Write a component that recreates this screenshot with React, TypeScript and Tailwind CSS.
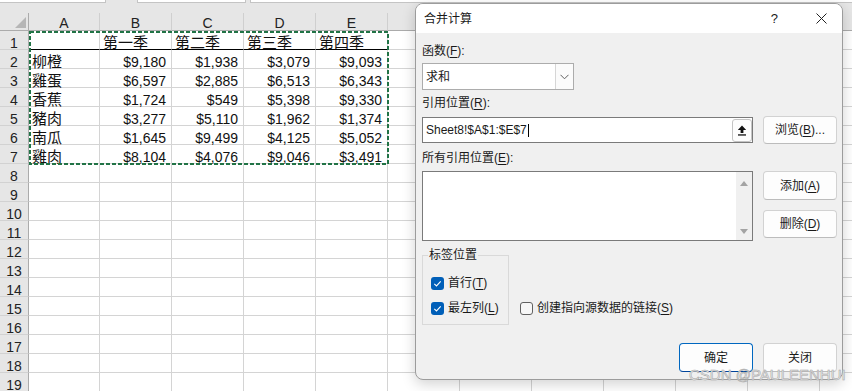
import React from "react";

const COLS = ["A", "B", "C", "D", "E", "F", "G", "H", "I", "J", "K", "L"];
const DATA: string[][] = [
  ["", "第一季", "第二季", "第三季", "第四季"],
  ["柳橙", "$9,180", "$1,938", "$3,079", "$9,093"],
  ["雞蛋", "$6,597", "$2,885", "$6,513", "$6,343"],
  ["香蕉", "$1,724", "$549", "$5,398", "$9,330"],
  ["豬肉", "$3,277", "$5,110", "$1,962", "$1,374"],
  ["南瓜", "$1,645", "$9,499", "$4,125", "$5,052"],
  ["雞肉", "$8,104", "$4,076", "$9,046", "$3,491"],
];

const colW = (i: number) => (i === 0 ? "w-[71px]" : "w-[72px]");

function Cell({ r, c }: { r: number; c: number }) {
  const row = DATA[r - 1];
  const val = row && c < 5 ? row[c] : "";
  const isNum = val.startsWith("$");
  const bottom = r === 1 && c < 5 ? "border-b-black" : "border-b-[#d4d4d4]";
  return (
    <div
      className={`${colW(c)} h-[19px] shrink-0 bg-white border-r border-b border-r-[#d4d4d4] ${bottom} pt-[3px] leading-[18px] whitespace-nowrap text-[#111] ${
        isNum ? "text-right pr-[5px] text-[14px]" : "pl-[3px] text-[15px]"
      }`}
    >
      {val}
    </div>
  );
}

function Sheet() {
  const rows = Array.from({ length: 19 }, (_, i) => i + 1);
  return (
    <div className="font-['Liberation_Sans','Noto_Sans_CJK_SC',sans-serif] bg-white">
      {/* top strip */}
      <div className="h-[13px] bg-[#e6e6e6] flex items-start">
        <div className="w-[106px] h-[3px] bg-white border-r border-b border-[#c4c4c4]" />
        <div className="ml-[31px] w-[109px] h-[3px] bg-white border-x border-b border-[#c4c4c4]" />
        <div className="ml-[4px] flex-1 h-[3px] bg-white border-l border-b border-[#c4c4c4]" />
      </div>
      {/* column header */}
      <div className="flex h-[18px]">
        <div className="w-[29px] shrink-0 h-[18px] bg-[#e6e6e6] border-r border-b border-[#ababab] relative">
          <svg className="absolute left-[15px] top-[4px]" width="11" height="11" viewBox="0 0 11 11">
            <path d="M11 0 L11 11 L0 11 Z" fill="#b6b6b6" />
          </svg>
        </div>
        {COLS.map((c, i) => (
          <div
            key={c}
            className={`${colW(i)} shrink-0 h-[18px] bg-[#e6e6e6] border-r border-r-[#cfcfcf] border-b border-b-[#ababab] text-center text-[14px] leading-[17px] pt-[2px] text-[#222]`}
          >
            {c}
          </div>
        ))}
      </div>
      {rows.map((r) => (
        <div key={r} className="flex h-[19px]">
          <div className="w-[29px] shrink-0 h-[19px] bg-[#e6e6e6] border-r border-r-[#ababab] border-b border-b-[#d2d2d2] text-center text-[14px] leading-[18px] pt-[3px] text-[#222]">
            {r}
          </div>
          {COLS.map((c, i) => (
            <Cell key={c} r={r} c={i} />
          ))}
        </div>
      ))}
    </div>
  );
}

function U({ children }: { children: React.ReactNode }) {
  return <span className="underline underline-offset-[2px]">{children}</span>;
}

function Btn({ children, primary, className = "" }: { children: React.ReactNode; primary?: boolean; className?: string }) {
  return (
    <div
      className={`w-[74px] flex items-center justify-center rounded-[4px] bg-[#fdfdfd] border ${
        primary ? "border-[#0067c0] border-b-[#00449a]" : "border-[#d2d2d2] border-b-[#bcbcbc]"
      } ${className}`}
    >
      {children}
    </div>
  );
}

function Check({ checked }: { checked: boolean }) {
  return checked ? (
    <div className="w-[13px] h-[13px] rounded-[3px] bg-[#005fb8] flex items-center justify-center shrink-0">
      <svg width="13" height="13" viewBox="0 0 13 13">
        <path d="M3.3 6.8 L5.5 8.9 L9.7 4.3" fill="none" stroke="white" strokeWidth="1.1" />
      </svg>
    </div>
  ) : (
    <div className="w-[13px] h-[13px] rounded-[3px] bg-[#f7f7f7] border border-[#616161] shrink-0" />
  );
}

function Dialog() {
  return (
    <div className="absolute left-[415px] top-[3px] w-[428px] h-[377px] rounded-[8px] border border-[#9c9c9c] bg-[#f0f0f0] overflow-hidden shadow-[0_4px_14px_rgba(0,0,0,0.18)] font-['Liberation_Sans','Noto_Sans_CJK_SC',sans-serif] text-[12px] text-[#1a1a1a]">
      {/* title bar */}
      <div className="h-[29px] bg-white flex items-center pl-[8px]">
        <span className="text-[12px]">合并计算</span>
        <span className="ml-auto mr-[38px] text-[13px]">?</span>
        <svg className="mr-[15px]" width="11" height="11" viewBox="0 0 11 11">
          <path d="M0.5 0.5 L10.5 10.5 M10.5 0.5 L0.5 10.5" stroke="#222" strokeWidth="1" />
        </svg>
      </div>
      {/* body */}
      <div className="pl-[6px] pr-[5px]">
        <div className="mt-[10px] h-[16px] leading-[16px]">
          函数(<U>F</U>):
        </div>
        <div className="mt-[4px] w-[152px] h-[27px] bg-white border border-[#acacac] flex">
          <div className="flex-1 flex items-center pl-[3px]">求和</div>
          <div className="w-[18px] border-l border-[#d6d6d6] bg-[#fbfbfb] flex items-center justify-center">
            <svg width="9" height="6" viewBox="0 0 9 6">
              <path d="M0.5 0.8 L4.5 4.8 L8.5 0.8" fill="none" stroke="#606060" strokeWidth="1" />
            </svg>
          </div>
        </div>
        <div className="mt-[5px] h-[16px] leading-[16px]">
          引用位置(<U>R</U>):
        </div>
        <div className="mt-[5px] h-[28px] flex items-center">
          <div className="w-[331px] h-[26px] bg-white border border-[#7a7a7a] flex items-center pl-[3px]">
            <span>Sheet8!$A$1:$E$7</span>
            <span className="ml-[1px] w-[1px] h-[13px] bg-black" />
            <div className="ml-auto w-[20px] h-[23px] rounded-[3px] border border-[#c4c4c4] bg-[#fdfdfd] flex items-center justify-center">
              <svg width="10" height="11" viewBox="0 0 10 11">
                <path d="M5 0.5 L9.2 5 L6.4 5 L6.4 8 L3.6 8 L3.6 5 L0.8 5 Z" fill="#111" />
                <rect x="1" y="9.3" width="8" height="1.3" fill="#111" />
              </svg>
            </div>
          </div>
          <Btn className="ml-[10px] h-[28px]">
            浏览(<U>B</U>)...
          </Btn>
        </div>
        <div className="mt-[6px] h-[16px] leading-[16px]">
          所有引用位置(<U>E</U>):
        </div>
        <div className="mt-[5px] flex">
          <div className="w-[331px] h-[70px] bg-white border border-[#7a7a7a] flex">
            <div className="flex-1" />
            <div className="w-[16px] bg-[#f0f0f0] flex flex-col items-center justify-between pt-[9px] pb-[6px]">
              <svg width="8" height="5" viewBox="0 0 8 5">
                <path d="M4 0 L8 5 L0 5 Z" fill="#a3a3a3" />
              </svg>
              <svg width="8" height="5" viewBox="0 0 8 5">
                <path d="M0 0 L8 0 L4 5 Z" fill="#a3a3a3" />
              </svg>
            </div>
          </div>
          <div className="ml-[10px] flex flex-col">
            <Btn className="h-[29px]">
              添加(<U>A</U>)
            </Btn>
            <Btn className="mt-[10px] h-[28px]">
              删除(<U>D</U>)
            </Btn>
          </div>
        </div>
        <div className="mt-[14px] flex items-end">
          <div className="relative w-[87px] h-[70px] border border-[#d9d9d9] pl-[8px] pt-[21px]">
            <div className="absolute left-[5px] top-[-9px] px-[1px] bg-[#f0f0f0] leading-[16px] text-[12px]">标签位置</div>
            <div className="flex items-center h-[13px]">
              <Check checked />
              <span className="ml-[4px] leading-[13px]">
                首行(<U>T</U>)
              </span>
            </div>
            <div className="flex items-center h-[13px] mt-[12px]">
              <Check checked />
              <span className="ml-[4px] leading-[13px]">
                最左列(<U>L</U>)
              </span>
            </div>
          </div>
          <div className="ml-[11px] mb-[10px] flex items-center h-[13px]">
            <Check checked={false} />
            <span className="ml-[4px] leading-[13px]">
              创建指向源数据的链接(<U>S</U>)
            </span>
          </div>
        </div>
        <div className="mt-[18px] flex justify-end">
          <Btn primary className="h-[29px]">
            确定
          </Btn>
          <Btn className="ml-[10px] h-[29px]">关闭</Btn>
        </div>
      </div>
    </div>
  );
}

export default function App() {
  return (
    <div className="relative w-[852px] h-[391px] overflow-hidden bg-white">
      <Sheet />
      <svg className="absolute left-[28px] top-[30px]" width="362" height="136" viewBox="0 0 362 136">
        <rect x="2" y="2" width="358" height="132" fill="none" stroke="#217346" strokeWidth="2" strokeDasharray="4 2" />
      </svg>
      <Dialog />
      <div className="absolute left-[689px] top-[366px] whitespace-nowrap text-[15px] leading-[18px] font-['Liberation_Sans',sans-serif] text-[#f6f6f6] [-webkit-text-stroke:0.6px_#a6a6a6]">
        CSDN @PAULEENHUI
      </div>
    </div>
  );
}
